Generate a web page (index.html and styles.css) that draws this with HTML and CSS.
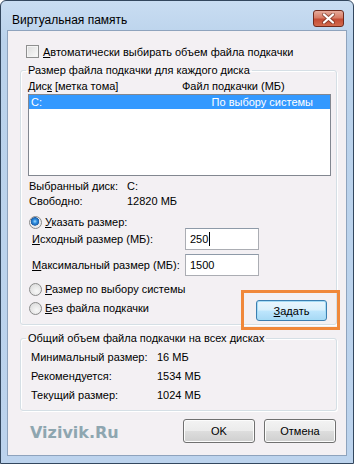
FILE: index.html
```html
<!doctype html>
<html>
	<head>
		<meta charset="utf-8" />
		<title>Виртуальная память</title>
		<link rel="stylesheet" href="styles.css">
	</head>
	<body>
		<div class="window">
			<div class="titlebar">
				<span class="title">Виртуальная память</span>
				<span class="close">
					<svg width="13" height="11" viewBox="0 0 13 11">
						<path d="M2 1.5 L11 9.5 M11 1.5 L2 9.5" stroke="#5b2418" stroke-width="4" stroke-linecap="round" opacity="0.55" />
						<path d="M2 1.5 L11 9.5 M11 1.5 L2 9.5" stroke="#fff" stroke-width="2.2" stroke-linecap="round" />
					</svg>
				</span>
			</div>

			<div class="client">
				<div class="check-row"><span class="checkbox"></span><span><u>А</u>втоматически выбирать объем файла подкачки</span></div>

				<fieldset class="group disks">
					<legend>Размер файла подкачки для каждого диска</legend>
					<div class="list-head">
						<span class="col-disk">Дис<u>к</u> [метка тома]</span>
						<span>Файл подкачки (МБ)</span>
					</div>
					<div class="listbox">
						<div class="list-item selected"><span>C:</span><span>По выбору системы</span></div>
					</div>

					<div class="info">
						<div class="info-row"><span class="info-label">Выбранный диск:</span><span>C:</span></div>
						<div class="info-row"><span class="info-label">Свободно:</span><span>12820 МБ</span></div>
					</div>

					<div class="radio-row first"><span class="radio checked"></span><span><u>У</u>казать размер:</span></div>
					<div class="size-row"><span class="size-label"><u>И</u>сходный размер (МБ):</span><span class="input">250<span class="caret"></span></span></div>
					<div class="size-row"><span class="size-label"><u>М</u>аксимальный размер (МБ):</span><span class="input">1500</span></div>

					<div class="bottom-row">
						<div class="radios">
							<div class="radio-row"><span class="radio"></span><span><u>Р</u>азмер по выбору системы</span></div>
							<div class="radio-row"><span class="radio"></span><span><u>Б</u>ез файла подкачки</span></div>
						</div>
						<span class="highlight"><button class="btn default"><u>З</u>адать</button></span>
					</div>
				</fieldset>

				<fieldset class="group totals">
					<legend>Общий объем файла подкачки на всех дисках</legend>
					<div class="total-row"><span class="total-label">Минимальный размер:</span><span>16 МБ</span></div>
					<div class="total-row"><span class="total-label">Рекомендуется:</span><span>1534 МБ</span></div>
					<div class="total-row"><span class="total-label">Текущий размер:</span><span>1024 МБ</span></div>
				</fieldset>

				<div class="footer">
					<span class="mark">Vizivik.Ru</span>
					<button class="btn">OK</button>
					<button class="btn">Отмена</button>
				</div>
			</div>
		</div>
	</body>
</html>
```

FILE: styles.css
```css
body {
	margin: 0;
	font-family: "Liberation Sans", Arial, sans-serif;
	font-size: 11px;
	color: #000;
	white-space: nowrap;
}

u {
	text-decoration: underline;
	text-underline-offset: 1px;
}

.window {
	width: 354px;
	height: 464px;
	box-sizing: border-box;
	border: 1px solid #33475e;
	border-radius: 6px 6px 0 0;
	background: linear-gradient(#c9ddf2, #bad2eb 40px, #bcd3ed);
	padding: 0 6px;
}

.titlebar {
	height: 29px;
	display: flex;
	justify-content: space-between;
}

.title {
	padding: 12px 0 0 5px;
	line-height: 15px;
	font-size: 12px;
}

.close {
	margin-top: 9px;
	margin-right: 3px;
	width: 29px;
	height: 15px;
	border: 1px solid #6f2a1d;
	border-radius: 3px;
	background: linear-gradient(#e6ab9c, #d77c66 45%, #c44c35 55%, #d36b4e);
	display: flex;
	align-items: center;
	justify-content: center;
}

.client {
	height: 426px;
	box-sizing: border-box;
	border: 1px solid #8ea3bd;
	background: #f3f0f3;
	padding: 13px 9px 0 12px;
}

.check-row {
	display: flex;
	align-items: center;
	gap: 4px;
	height: 15px;
	padding-left: 6px;
}

.checkbox {
	flex-shrink: 0;
	width: 11px;
	height: 11px;
	border: 1px solid #8e8f8f;
	background: linear-gradient(135deg, #dcdcdc, #fbfbfb);
	box-shadow: inset 0 0 0 1px #f4f4f4;
}

.group {
	margin: 4px 0 0;
	padding: 0 0 3px;
	border: 1px solid #d5dfe5;
	border-radius: 3px;
	box-shadow: inset 1px 1px 0 #fff, 1px 1px 0 #fff;
}

.group legend {
	margin-left: 5px;
	padding: 0 2px;
	line-height: 15px;
}

.list-head {
	display: flex;
	margin-top: 1px;
	padding-left: 7px;
	line-height: 15px;
}

.col-disk {
	width: 154px;
}

.listbox {
	margin: 0 5px 0 7px;
	height: 80px;
	border: 1px solid #828790;
	background: #fff;
}

.list-item {
	display: flex;
	justify-content: space-between;
	height: 14px;
	line-height: 14px;
	padding: 0 17px 0 2px;
}

.selected {
	background: #3399ff;
	color: #fff;
}

.info {
	margin-top: 3px;
	padding-left: 8px;
}

.info-row {
	display: flex;
	line-height: 15px;
}

.info-label {
	flex-shrink: 0;
	width: 98px;
}

.radio-row {
	display: flex;
	align-items: center;
	gap: 3px;
	height: 14px;
	padding-left: 8px;
}

.radio-row.first {
	margin-top: 7px;
	height: 12px;
}

.radio {
	flex-shrink: 0;
	width: 11px;
	height: 11px;
	border: 1px solid #8a8a8a;
	border-radius: 50%;
	background: radial-gradient(circle at 60% 65%, #f8f8f8, #d6d6d6);
}

.radio.checked {
	background: radial-gradient(circle at 45% 40%, #a6dcff 0, #2d8ee0 2px, #1f5fa8 4px, #e9e9e9 4.5px, #f4f4f4);
}

.size-row {
	display: flex;
	align-items: center;
	height: 22px;
	padding-left: 11px;
	margin-bottom: 4px;
}

.size-label {
	flex-shrink: 0;
	width: 153px;
}

.input {
	box-sizing: border-box;
	width: 74px;
	height: 22px;
	border: 1px solid #abadb3;
	border-top-color: #8e9aa8;
	background: #fff;
	padding-left: 4px;
	display: flex;
	align-items: center;
}

.caret {
	width: 1px;
	height: 14px;
	background: #000;
	margin-left: 1px;
}

.bottom-row {
	display: flex;
	justify-content: space-between;
	margin-top: 6px;
}

.radios {
	display: flex;
	flex-direction: column;
	gap: 5px;
	padding-bottom: 6px;
}

.highlight {
	position: relative;
	align-self: flex-end;
	margin-right: 9px;
	display: flex;
}

.highlight::after {
	content: "";
	position: absolute;
	left: -15px;
	right: -13px;
	top: -10px;
	bottom: -9px;
	border: 3px solid #f0883a;
}

.btn {
	font: inherit;
	color: #000;
	width: 72px;
	height: 22px;
	padding: 0;
	border: 1px solid #707070;
	border-radius: 3px;
	background: linear-gradient(#f3f3f3, #ebebeb 49%, #dddddd 51%, #cfcfcf);
	box-shadow: inset 0 0 0 1px #fcfcfc;
}

.btn.default {
	width: 71px;
	height: 21px;
	border-color: #3c7fb1;
	background: linear-gradient(#eaf6fd, #d9f0fc 49%, #bee6fd 51%, #a7d9f5);
	box-shadow: inset 0 0 0 1px #a6dcf6;
}

.totals {
	margin-top: 6px;
	padding-bottom: 7px;
}

.total-row {
	display: flex;
	line-height: 15px;
	margin-top: 4px;
	padding-left: 10px;
}

.total-label {
	flex-shrink: 0;
	width: 126px;
}

.footer {
	display: flex;
	align-items: center;
	gap: 9px;
	margin-top: 8px;
	padding: 0 1px 0 10px;
}

.footer .btn {
	height: 24px;
}

.mark {
	flex: 1;
	font-family: "DejaVu Sans", Verdana, sans-serif;
	font-weight: bold;
	font-size: 16px;
	color: #8ea6b0;
	padding-top: 2px;
}
```
